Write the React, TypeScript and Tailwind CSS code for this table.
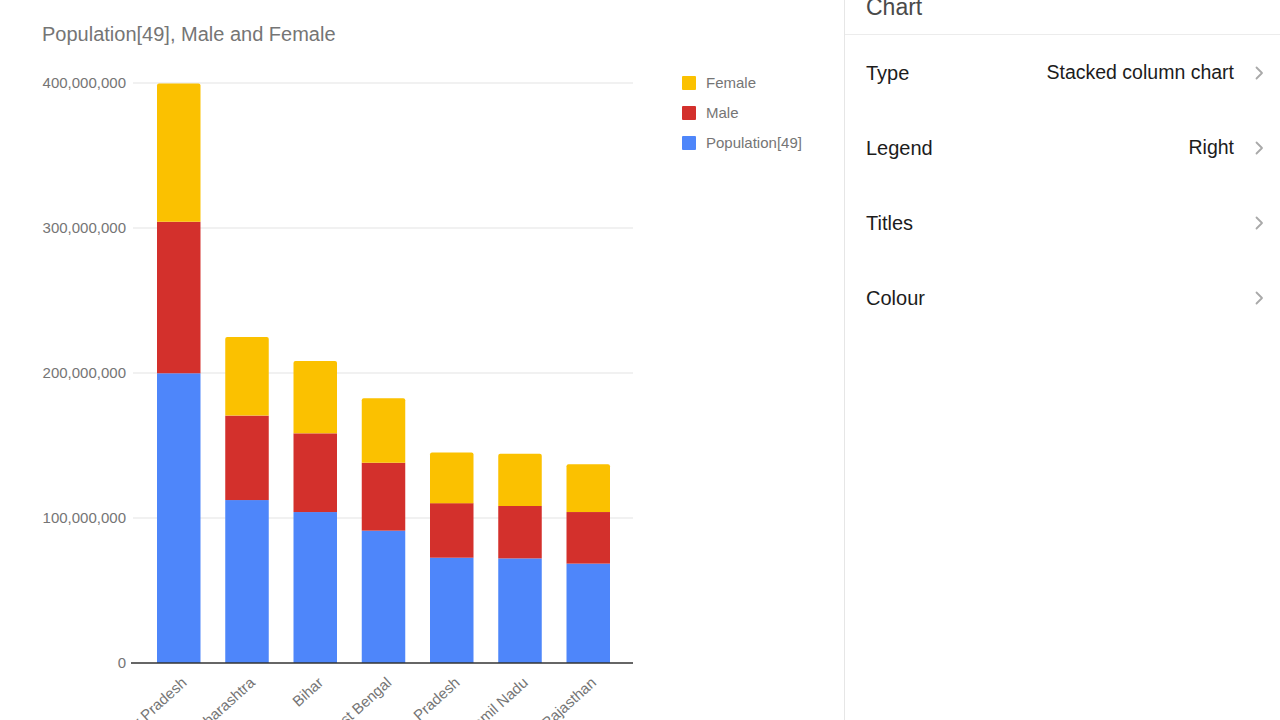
const states = [
  { name: "Uttar Pradesh", male: 104480510, female: 95331831, total: 199812341 },
  { name: "Maharashtra", male: 58243056, female: 54131277, total: 112374333 },
  { name: "Bihar", male: 54278157, female: 49821295, total: 104099452 },
  { name: "West Bengal", male: 46809027, female: 44467088, total: 91276115 },
  { name: "Madhya Pradesh", male: 37612306, female: 35014503, total: 72626809 },
  { name: "Tamil Nadu", male: 36137975, female: 36009055, total: 72147030 },
  { name: "Rajasthan", male: 35550997, female: 32997440, total: 68548437 },
];

const BASE = 663;
const SCALE = 580 / 400000000;
const BAR_W = 43.5;
const FONT = '"Liberation Sans", Arial, sans-serif';

const ticks = [
  { label: "400,000,000", v: 400000000 },
  { label: "300,000,000", v: 300000000 },
  { label: "200,000,000", v: 200000000 },
  { label: "100,000,000", v: 100000000 },
  { label: "0", v: 0 },
];

const legend = [
  { label: "Female", color: "#fbc100" },
  { label: "Male", color: "#d3302c" },
  { label: "Population[49]", color: "#4e86fa" },
];

function StackedChart() {
  return (
    <svg width="844" height="720" viewBox="0 0 844 720" style={{ fontFamily: FONT }}>
      <text x="42" y="41" fontSize="20" fill="#757575">
        Population[49], Male and Female
      </text>

      {ticks.map((t) => {
        const y = BASE - t.v * SCALE;
        return (
          <g key={t.label}>
            {t.v > 0 && <line x1="133" x2="633" y1={y} y2={y} stroke="#e3e3e3" strokeWidth="1" />}
            <text x="126" y={y + 5} fontSize="15" fill="#757575" textAnchor="end">
              {t.label}
            </text>
          </g>
        );
      })}

      {states.map((s, i) => {
        const x = 157 + i * 68.25;
        const hPop = s.total * SCALE;
        const hMale = s.male * SCALE;
        const hFemale = s.female * SCALE;
        const yPop = BASE - hPop;
        const yMale = yPop - hMale;
        const yFemale = yMale - hFemale;
        const lx = x + BAR_W / 2 + 9;
        const ly = 684;
        return (
          <g key={s.name}>
            <rect x={x} y={yPop} width={BAR_W} height={hPop} fill="#4e86fa" />
            <rect x={x} y={yMale} width={BAR_W} height={hMale} fill="#d3302c" />
            <path
              d={`M${x} ${yMale} V${yFemale + 2} Q${x} ${yFemale} ${x + 2} ${yFemale} H${x + BAR_W - 2} Q${x + BAR_W} ${yFemale} ${x + BAR_W} ${yFemale + 2} V${yMale} Z`}
              fill="#fbc100"
            />
            <text
              x={lx}
              y={ly}
              fontSize="15"
              fill="#757575"
              textAnchor="end"
              transform={`rotate(-42 ${lx} ${ly})`}
            >
              {s.name}
            </text>
          </g>
        );
      })}

      <line x1="131" x2="633" y1={BASE} y2={BASE} stroke="#333333" strokeWidth="1.5" />

      {legend.map((l, i) => (
        <g key={l.label}>
          <rect x="682" y={76 + i * 30} width="14" height="14" rx="1" fill={l.color} />
          <text x="706" y={88 + i * 30} fontSize="15" fill="#757575">
            {l.label}
          </text>
        </g>
      ))}
    </svg>
  );
}

function Chevron() {
  return (
    <svg width="9" height="14" viewBox="0 0 9 14" fill="none">
      <path d="M1.5 1.5 L7 7 L1.5 12.5" stroke="#a9a9a9" strokeWidth="1.8" strokeLinecap="round" strokeLinejoin="round" />
    </svg>
  );
}

const options = [
  { label: "Type", value: "Stacked column chart" },
  { label: "Legend", value: "Right" },
  { label: "Titles", value: "" },
  { label: "Colour", value: "" },
];

export default function App() {
  return (
    <div className="flex h-[720px] w-[1280px] overflow-hidden bg-white" style={{ fontFamily: FONT }}>
      <div className="w-[844px] shrink-0">
        <StackedChart />
      </div>

      <div className="flex flex-1 flex-col border-l border-[#e6e6e6]">
        <div className="h-[35px] shrink-0 border-b border-[#ececec] pl-[21px]">
          <div className="-mt-[4px] text-[23px] leading-[23px] text-[#4a4a4a]">Chart</div>
        </div>
        {options.map((o) => (
          <div key={o.label} className="flex h-[75px] items-center pl-[21px] pr-[16px]">
            <span className="flex-1 text-[20px] text-[#1c1c1c]">{o.label}</span>
            {o.value && <span className="text-[19.5px] text-[#1c1c1c]">{o.value}</span>}
            <span className="ml-[21px] flex items-center">
              <Chevron />
            </span>
          </div>
        ))}
      </div>
    </div>
  );
}
